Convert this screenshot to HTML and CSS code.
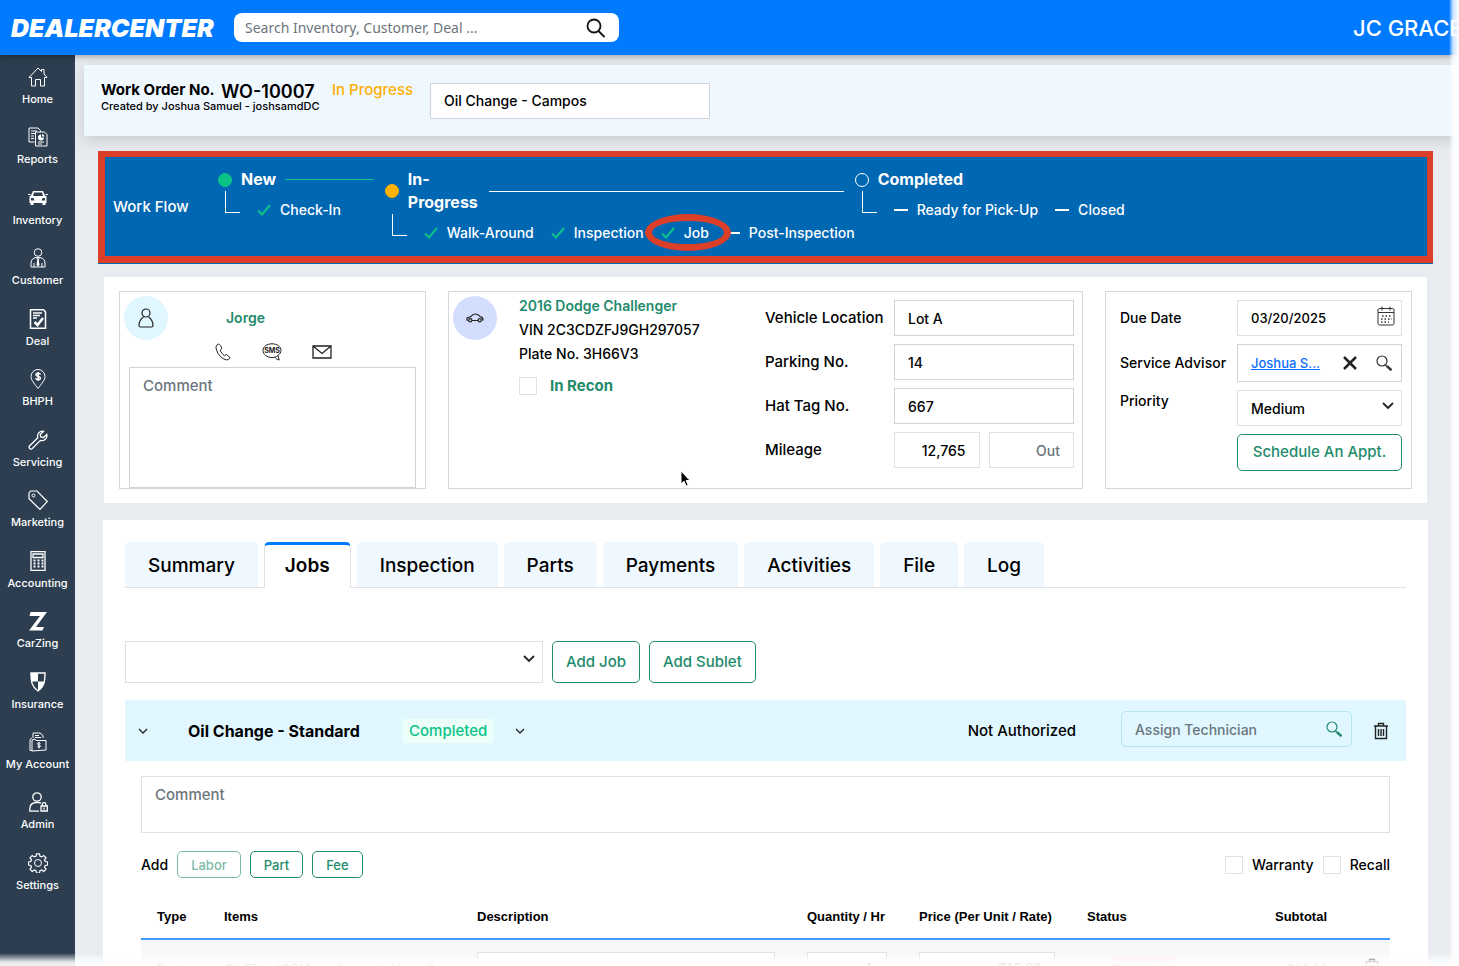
FILE: index.html
```html
<!DOCTYPE html>
<html lang="en">
<head>
  <meta charset="UTF-8">
  <meta name="viewport" content="width=device-width, initial-scale=1.0">
  <title>DealerCenter - Work Order</title>
  <link rel="stylesheet" href="styles.css">
</head>
<body>
  <!-- Top Bar -->
  <header class="topbar">
    <a href="#" class="logo">DEALERCENTER</a>
    <form class="search">
      <input type="search" placeholder="Search Inventory, Customer, Deal ..." aria-label="Search">
      <button type="button" aria-label="Search">
        <svg width="20" height="20" viewBox="0 0 20 20" fill="none" stroke="#111" stroke-width="1.800"><circle cx="8" cy="8" r="6.500"/><path d="M12.500 13l6 6"/></svg>
      </button>
    </form>
    <span class="dealer-name">JC GRACE</span>
  </header>

  <div class="shell">
    <!-- Sidebar -->
    <nav class="sidebar">
      <a href="#">
        <svg viewBox="0 0 20 20"><path d="M1 10.500L10 1l3.500 3.500V2.500h2.500v4.500L19 10.500h-2.500V19h-4v-6.500h-5V19h-4v-8.500z"/></svg>
        Home
      </a>
      <a href="#">
        <svg viewBox="0 0 20 20"><path d="M6.500 15H1V1h9l2.500 2.500V5M3 4h6M3 6.500h4M3 9h3M3 11.500h3M7.500 5h9l2.500 2.500V19H7.500zM10 15h6M10 17h4"/><path class="solid" d="M13 7.500a3 3 0 1 0 3 3h-3z"/><path class="solid" d="M14 7a3 3 0 0 1 2.500 2.500H14z"/></svg>
        Reports
      </a>
      <a href="#">
        <svg viewBox="0 0 20 20"><path class="solid" fill-rule="evenodd" d="M5 3h10l2 4.500 1.500 1v6.500h-1v2h-3v-2h-9v2h-3v-2h-1V8.500l1.500-1zM6 4.500L5 8h10l-1-3.500zM3 10v2.500h3.500L5.500 10zM17 10h-2.500l-1 2.500H17z"/><path d="M0 6.500h2.500M17.500 6.500H20"/></svg>
        Inventory
      </a>
      <a href="#">
        <svg viewBox="0 0 20 20"><circle cx="10" cy="4.500" r="3.800"/><path d="M3 19v-4c0-3 2-5 5-5.500h4c3 .5 5 2.500 5 5.500v4zM6 19v-4M14 19v-4M8.500 9.500L10 12l1.500-2.500"/><path class="solid" d="M9.300 11.500h1.400l.8 5.500-1.500 1.500L8.500 17z"/></svg>
        Customer
      </a>
      <a href="#">
        <svg viewBox="0 0 20 20"><path stroke-width="1.500" d="M3 .8h12.500L17.500 3v16.200H2.500V.8zM5 4h9M5 6.500h7M5 9h4"/><path stroke-width="2.500" d="M6.500 13l3 3 5.500-7"/></svg>
        Deal
      </a>
      <a href="#">
        <svg viewBox="0 0 20 20"><path d="M10 19.500C6 14 3 11 3 7.500a7 7 0 0 1 14 0c0 3.500-3 6.500-7 12z"/><path stroke-width="1.500" d="M12.500 5.500c-.5-1.500-4.500-1.700-4.500.3 0 2.200 4.500 1.200 4.500 3.400 0 2-4.300 1.700-4.800 0M10.200 3v9"/></svg>
        BHPH
      </a>
      <a href="#">
        <svg viewBox="0 0 20 20"><path stroke-width="1.300" d="M15.500 1.300a5 5 0 0 0-5.700 6.500L1.500 16a1.900 1.900 0 0 0 2.600 2.700l8.300-8.300a5 5 0 0 0 6.400-5.900L15.500 7.500 12.700 7l-.5-2.500z"/></svg>
        Servicing
      </a>
      <a href="#">
        <svg viewBox="0 0 20 20"><path stroke-width="1.200" d="M1 3l1.500-2L9 1l10.300 10.500L12 19.500 1 8.800z"/><circle cx="5.500" cy="5.500" r="1.500"/></svg>
        Marketing
      </a>
      <a href="#">
        <svg viewBox="0 0 20 20"><path stroke-width="1.300" d="M3 .7h14v18.600H3zM5 3h10v3.500H5z"/><path stroke-width="2" stroke-dasharray="2 2" d="M5.500 9.500h10M5.500 12.500h10M5.500 15.500h10"/></svg>
        Accounting
      </a>
      <a href="#">
        <svg viewBox="0 0 20 20"><path class="solid" d="M2.500 1H19L8 16h8l-1.500 3.500H1L12 5H1.500z"/></svg>
        CarZing
      </a>
      <a href="#">
        <svg viewBox="0 0 20 20"><path class="solid" d="M10 1v8.500H3.500C3 7 3 4 3 1z"/><path class="solid" d="M10 9.500h6.500C15.500 14 13.500 17 10 19z"/><path stroke-width="1.400" d="M3 1h14c0 9-1 14-7 18C4 15 3 10 3 1z"/></svg>
        Insurance
      </a>
      <a href="#">
        <svg viewBox="0 0 20 20"><path d="M5 6V1h7l3 2.500V6M7 3.500h4M7 5.500h6M4 18.500H2V7.500l2-1.500M4 8l3-1 1 1.500h10V18l-14 1z"/><path d="M12.500 11.500c-.5-1-3-1-3 .3 0 1.500 3 .8 3 2.200 0 1.500-2.800 1.300-3.200.2M11 10v6.500"/></svg>
        My Account
      </a>
      <a href="#">
        <svg viewBox="0 0 20 20"><circle cx="9" cy="5" r="4.200" stroke-width="1.300"/><path stroke-width="1.300" d="M11 19.200H1.800v-2c0-4 2.500-6.400 6-6.700h3c1 .1 1.500.3 2.200.8M13 14h6.300v5H13zM14.300 14v-1.500a1.800 1.800 0 0 1 3.600 0V14M16 15.500v2"/></svg>
        Admin
      </a>
      <a href="#">
        <svg viewBox="0 0 20 20"><circle cx="10" cy="10" r="3.500"/><path stroke-width="1.200" d="M8.500.8h3l.5 2.400 1.700.7 2.100-1.400 2.200 2.200-1.500 2.100.7 1.700 2.400.5v3l-2.400.5-.7 1.700 1.500 2.100-2.200 2.200-2.100-1.500-1.700.7-.5 2.400h-3l-.5-2.400-1.700-.7-2.100 1.500L2 16.300l1.500-2.100-.7-1.700L.500 12V9l2.300-.5.700-1.700L2 4.700l2.200-2.200 2.100 1.400L8 3.200z"/></svg>
        Settings
      </a>
    </nav>

    <main class="content">
      <!-- Work Order Title -->
      <section class="order-bar">
        <div class="order-info">
          <div class="order-line">
            <strong>Work Order No.</strong>
            <span class="order-no">WO-10007</span>
            <span class="order-status">In Progress</span>
          </div>
          <p>Created by Joshua Samuel - joshsamdDC</p>
        </div>
        <input type="text" class="field order-name" value="Oil Change - Campos" aria-label="Work order name">
      </section>

      <!-- Work Flow -->
      <section class="workflow">
        <span class="workflow-label">Work Flow</span>
        <div class="stage">
          <div class="stage-head">
            <span class="dot dot-green"></span><h3>New</h3><span class="line line-green"></span>
          </div>
          <ul class="steps">
            <li><svg class="check" viewBox="0 0 14 12"><path d="M1 6.500l4 4L13 1"/></svg>Check-In</li>
          </ul>
        </div>
        <div class="stage">
          <div class="stage-head">
            <span class="dot dot-orange"></span><h3 class="wrap">In-<br>Progress</h3><span class="line"></span>
          </div>
          <ul class="steps">
            <li><svg class="check" viewBox="0 0 14 12"><path d="M1 6.500l4 4L13 1"/></svg>Walk-Around</li>
            <li><svg class="check" viewBox="0 0 14 12"><path d="M1 6.500l4 4L13 1"/></svg>Inspection</li>
            <li class="current"><svg class="check" viewBox="0 0 14 12"><path d="M1 6.500l4 4L13 1"/></svg>Job</li>
            <li><span class="dash"></span>Post-Inspection</li>
          </ul>
        </div>
        <div class="stage">
          <div class="stage-head">
            <span class="dot"></span><h3>Completed</h3>
          </div>
          <ul class="steps">
            <li><span class="dash"></span>Ready for Pick-Up</li>
            <li><span class="dash"></span>Closed</li>
          </ul>
        </div>
      </section>

      <!-- Customer, Vehicle and Schedule -->
      <section class="cards">
        <div class="card customer">
          <div class="customer-head">
            <span class="avatar">
              <svg width="16" height="20" viewBox="0 0 16 20" fill="none" stroke="#222" stroke-width="1.200"><circle cx="8" cy="5" r="4"/><path d="M5.500 9C2.500 11 1 14 1 17.500c0 1 .5 1.500 1.500 1.500h11c1 0 1.500-.5 1.500-1.500C15 14 13.500 11 10.500 9"/></svg>
            </span>
            <a href="#" class="green-link">Jorge</a>
          </div>
          <div class="contact">
            <button type="button" aria-label="Call"><svg width="18" height="18" viewBox="0 0 18 18"><path d="M4.500 1C2 2 1.500 4 2.500 7c1.500 4.500 4.500 8 8.500 9.500 2.500 1 4.500 0 5-2l-3.500-3-2 1.200C8.500 11.500 7 9.500 6.200 7l1.600-1.500C7.500 3.500 6 1.500 4.500 1z"/></svg></button>
            <button type="button" aria-label="Text message"><svg width="20" height="18" viewBox="0 0 20 18"><path d="M16 12.500C14.500 14 12 14.500 10 14.500 5 14.500 1 11.500 1 7.500S5 .8 10 .8s9 2.700 9 6.700c0 1.800-1.200 3.600-3 5l1.200 4.500c-2-.3-3.200-1.200-4.200-2.700"/><text x="10" y="10">SMS</text></svg></button>
            <button type="button" aria-label="Email"><svg width="20" height="14" viewBox="0 0 20 14"><path stroke-width="1.300" d="M1 1h18v12H1zM1 1l9 7.500L19 1"/></svg></button>
          </div>
          <textarea class="field" placeholder="Comment" aria-label="Customer comment"></textarea>
        </div>

        <div class="card vehicle">
          <span class="avatar avatar-blue">
            <svg width="18" height="10" viewBox="0 0 18 10" fill="none" stroke="#222" stroke-width="1.200"><path d="M2.500 7.500L1 7V5l3.500-1.200C6 2 7 1 9 1c2.500 0 4 1 5.500 2.800C16.500 4 17 5 17 7h-1.500M6 7.500h6"/><circle cx="4.300" cy="7.200" r="1.600"/><circle cx="13.700" cy="7.200" r="1.600"/></svg>
          </span>
          <div class="vehicle-info">
            <a href="#" class="green-link">2016 Dodge Challenger</a>
            <p>VIN 2C3CDZFJ9GH297057</p>
            <p>Plate No. 3H66V3</p>
            <label class="check-label recon"><input type="checkbox"> In Recon</label>
          </div>
          <div class="form-grid vehicle-form">
            <label for="location">Vehicle Location</label>
            <input type="text" id="location" class="field" value="Lot A">
            <label for="parking">Parking No.</label>
            <input type="text" id="parking" class="field" value="14">
            <label for="hat-tag">Hat Tag No.</label>
            <input type="text" id="hat-tag" class="field" value="667">
            <label for="mileage-in">Mileage</label>
            <div class="mileage">
              <input type="text" id="mileage-in" class="field light" value="12,765">
              <input type="text" class="field light" placeholder="Out" aria-label="Mileage out">
            </div>
          </div>
          <svg class="pointer" width="12" height="18" viewBox="0 0 12 18"><path d="M1 1v13l3-2.800L6.200 16l2-1-2.100-4.500H10z" fill="#000" stroke="#fff"/></svg>
        </div>

        <div class="card schedule">
          <div class="form-grid schedule-form">
            <label for="due-date">Due Date</label>
            <div class="field-wrap">
              <input type="text" id="due-date" class="field light" value="03/20/2025">
              <svg class="field-icon" width="18" height="20" viewBox="0 0 18 20" fill="none" stroke="#333"><rect x="1" y="2.500" width="16" height="16.500" rx="1.500"/><path d="M1 6.500h16M5 .5v4M13 .5v4"/><path stroke-width="1.500" stroke-dasharray="1.500 2" d="M5 10h10M4 13h11M4 16h8"/></svg>
            </div>
            <span class="form-label">Service Advisor</span>
            <div class="field advisor">
              <a href="#">Joshua S...</a>
              <button type="button" aria-label="Clear advisor"><svg width="14" height="14" viewBox="0 0 14 14" fill="none" stroke="#222" stroke-width="2.500"><path d="M1 1l12 12M13 1L1 13"/></svg></button>
              <button type="button" aria-label="Find advisor"><svg width="16" height="16" viewBox="0 0 16 16" fill="none" stroke="#333"><circle cx="6" cy="6" r="5" stroke-width="1.200"/><path stroke-width="1.500" d="M9.500 10l1.500 1.500"/><path stroke-width="2.500" d="M11 11.200l4.500 4"/></svg></button>
            </div>
            <label for="priority" class="priority-label">Priority</label>
            <div class="field-wrap">
              <select id="priority" class="field light"><option>Medium</option></select>
              <svg class="field-icon" width="12" height="8" viewBox="0 0 12 8" fill="none" stroke="#222" stroke-width="1.800"><path d="M1 1l5 5 5-5"/></svg>
            </div>
            <button type="button" class="btn schedule-btn">Schedule An Appt.</button>
          </div>
        </div>
      </section>

      <!-- Work Order Details -->
      <section class="details">
        <div class="tabs" role="tablist">
          <button type="button" role="tab">Summary</button>
          <button type="button" role="tab" class="active">Jobs</button>
          <button type="button" role="tab">Inspection</button>
          <button type="button" role="tab">Parts</button>
          <button type="button" role="tab">Payments</button>
          <button type="button" role="tab">Activities</button>
          <button type="button" role="tab">File</button>
          <button type="button" role="tab">Log</button>
        </div>

        <div class="add-job">
          <div class="field-wrap">
            <select class="field light" aria-label="Job"><option></option></select>
            <svg class="field-icon" width="12" height="8" viewBox="0 0 12 8" fill="none" stroke="#222" stroke-width="1.800"><path d="M1 1l5 5 5-5"/></svg>
          </div>
          <button type="button" class="btn">Add Job</button>
          <button type="button" class="btn">Add Sublet</button>
        </div>

        <div class="job-head">
          <button type="button" class="icon-btn" aria-label="Collapse job"><svg width="10" height="6" viewBox="0 0 10 6"><path d="M1 1l4 4 4-4"/></svg></button>
          <h2>Oil Change - Standard</h2>
          <span class="badge">Completed</span>
          <button type="button" class="icon-btn" aria-label="Change status"><svg width="10" height="6" viewBox="0 0 10 6"><path d="M1 1l4 4 4-4"/></svg></button>
          <span class="authorized">Not Authorized</span>
          <div class="field-wrap technician">
            <input type="text" class="field" placeholder="Assign Technician" aria-label="Assign technician">
            <svg class="field-icon" width="16" height="16" viewBox="0 0 16 16" fill="none" stroke="#228b6c"><circle cx="6" cy="6" r="5" stroke-width="1.200"/><path stroke-width="1.500" d="M9.500 10l1.500 1.500"/><path stroke-width="2.500" d="M11 11.200l4.500 4"/></svg>
          </div>
          <button type="button" class="icon-btn" aria-label="Delete job"><svg width="16" height="18" viewBox="0 0 16 18"><path stroke-width="1.400" d="M1 4h14M5.500 4V1.500h5V4M2.500 4v12.500h11V4M5.500 7v7M8 7v7M10.500 7v7"/></svg></button>
        </div>

        <div class="job-body">
          <textarea class="field light" placeholder="Comment" aria-label="Job comment"></textarea>
          <div class="add-line">
            <span>Add</span>
            <button type="button" class="btn btn-small" disabled>Labor</button>
            <button type="button" class="btn btn-small">Part</button>
            <button type="button" class="btn btn-small">Fee</button>
            <label class="check-label push"><input type="checkbox"> Warranty</label>
            <label class="check-label"><input type="checkbox"> Recall</label>
          </div>
          <table>
            <thead>
              <tr>
                <th class="col-type">Type</th>
                <th class="col-items">Items</th>
                <th class="col-desc">Description</th>
                <th class="col-qty">Quantity / Hr</th>
                <th class="col-price">Price (Per Unit / Rate)</th>
                <th>Status</th>
                <th class="right">Subtotal</th>
                <th class="col-delete"></th>
              </tr>
            </thead>
            <tbody>
              <tr>
                <td>Part</td>
                <td>Oil Filter (OEM or aftermarket brand)</td>
                <td><input type="text" class="field light" aria-label="Description"></td>
                <td><input type="text" class="field light right" value="1" aria-label="Quantity"></td>
                <td><input type="text" class="field light right" value="$10.00" aria-label="Price"></td>
                <td><span class="requested">Requested</span></td>
                <td class="right">$10.00</td>
                <td class="right delete"><button type="button" class="icon-btn" aria-label="Delete line"><svg width="16" height="18" viewBox="0 0 16 18"><path stroke-width="1.400" d="M1 4h14M5.500 4V1.500h5V4M2.500 4v12.500h11V4M5.500 7v7M8 7v7M10.500 7v7"/></svg></button></td>
              </tr>
            </tbody>
          </table>
        </div>
      </section>
    </main>
  </div>
  <div class="fade fade-right"></div>
  <div class="fade fade-bottom"></div>
</body>
</html>
```
FILE: styles.css
```css
/* Reset */
*,
*::before,
*::after {
  margin: 0;
  padding: 0;
  box-sizing: border-box;
}

body {
  height: 100vh;
  display: flex;
  flex-direction: column;
  overflow: hidden;
  background-color: #e8ecf1;
  color: #000;
  font-family: Inter, "Liberation Sans", sans-serif;
  font-size: 14px;
  font-weight: 500;
}

button,
input,
select,
textarea {
  font: inherit;
  color: inherit;
}

button {
  background: none;
  border: none;
  cursor: pointer;
}

a {
  text-decoration: none;
}

ul {
  list-style: none;
}

/* Top Bar */
.topbar {
  flex: none;
  height: 55px;
  display: flex;
  align-items: center;
  padding-left: 11px;
  background-color: #007bff;
  box-shadow: 0 2px 6px rgba(0, 0, 0, 0.3);
  position: relative;
  z-index: 1;
}

.logo {
  width: 223px;
  color: #fff;
  font-size: 25px;
  font-weight: 900;
  font-style: italic;
}

.search {
  width: 385px;
  height: 29px;
  display: flex;
  align-items: center;
  padding: 0 13px 0 11px;
  background-color: #fff;
  border-radius: 8px;
}

.search input {
  flex: 1;
  border: none;
  outline: none;
  background: none;
  font-family: "Noto Sans", sans-serif;
  font-weight: 400;
}

.search button,
.search svg {
  display: block;
}

::placeholder {
  color: #6c757d;
  opacity: 1;
}

.dealer-name {
  width: 106px;
  margin-left: auto;
  color: #fff;
  font-size: 22px;
  white-space: nowrap;
  overflow: hidden;
}

/* Layout */
.shell {
  flex: 1;
  min-height: 0;
  display: flex;
}

.content {
  flex: 1;
  min-width: 0;
  padding: 10px 0 0 9px;
  overflow: hidden;
}

/* Sidebar */
.sidebar {
  flex: none;
  width: 75px;
  display: flex;
  flex-direction: column;
  justify-content: space-between;
  padding: 12px 0 74px;
  background-color: #2c3e50;
}

.sidebar a {
  display: flex;
  flex-direction: column;
  align-items: center;
  gap: 5px;
  color: #fff;
  font-size: 11px;
  line-height: 14px;
  font-weight: 500;
  white-space: nowrap;
}

.sidebar svg {
  width: 20px;
  height: 20px;
  fill: none;
  stroke: #fff;
}

.sidebar .solid {
  fill: #fff;
  stroke: none;
}

/* Work Order Title */
.order-bar {
  height: 71px;
  display: flex;
  align-items: center;
  padding-left: 17px;
  background-color: #eff7ff;
  box-shadow: 0 4px 14px rgba(0, 0, 0, 0.14);
}

.order-info {
  width: 329px;
  padding-bottom: 7px;
  white-space: nowrap;
}

.order-line {
  height: 18px;
  display: flex;
  font-size: 15px;
  line-height: 16px;
}

.order-line strong {
  width: 120px;
  font-weight: 700;
}

.order-no {
  width: 111px;
  font-size: 18px;
  line-height: 20px;
  font-weight: 600;
}

.order-status {
  color: #ffb000;
}

.order-info p {
  font-size: 11px;
  line-height: 12px;
}

.field {
  width: 100%;
  height: 36px;
  padding: 0 13px;
  background-color: #fff;
  border: 1px solid #ced4da;
  outline: none;
  font-size: 14px;
}

.field.light {
  border-color: #dee2e6;
}

.field.order-name {
  width: 280px;
}

textarea.field {
  display: block;
  padding-top: 8px;
  font-size: 15px;
  resize: none;
}

/* Work Flow */
.workflow {
  display: grid;
  grid-template-columns: 105px 167fr 469fr 573fr;
  height: 112px;
  margin: 15px 26px 0 14px;
  padding: 11px 0 0 8px;
  background-color: #0067b3;
  border: 6px solid #dc3f27;
  border-bottom-width: 7px;
  border-left-width: 7px;
  box-shadow: 0 1px 0 #0067b3;
  color: #fff;
  white-space: nowrap;
}

.workflow-label {
  padding-top: 29px;
  font-size: 15px;
}

.stage-head {
  display: flex;
  align-items: center;
  gap: 9px;
}

.stage h3 {
  font-size: 16px;
  line-height: 23px;
  font-weight: 700;
}

.stage h3.wrap {
  width: 72px;
}

.dot {
  width: 14px;
  height: 14px;
  border: 1px solid #fff;
  border-radius: 50%;
}

.dot-green {
  background-color: #0cc387;
  border-color: #0cc387;
}

.dot-orange {
  background-color: #ffb000;
  border-color: #ffb000;
}

.line {
  flex: 1;
  height: 1px;
  margin-right: 11px;
  background-color: #fff;
}

.line-green {
  background-color: #0cc387;
}

.steps {
  display: flex;
  gap: 17px;
  font-size: 14px;
  line-height: 38px;
}

/* Elbow from the stage dot to its steps */
.steps::before {
  content: "";
  width: 15px;
  height: 22px;
  margin-left: 7px;
  border-left: 1px solid #fff;
  border-bottom: 1px solid #fff;
}

.steps li {
  display: flex;
  align-items: center;
  gap: 9px;
}

.check {
  width: 14px;
  height: 12px;
  fill: none;
  stroke: #0cc387;
  stroke-width: 2;
}

.dash {
  width: 14px;
  height: 2px;
  background-color: #fff;
}

.current {
  position: relative;
}

.current::after {
  content: "";
  position: absolute;
  top: 0;
  left: -16px;
  right: -22px;
  height: 37px;
  border: 7px solid #dc3f27;
  border-radius: 50%;
}

/* Cards */
.cards {
  display: grid;
  grid-template-columns: 307px 1fr 307px;
  gap: 22px;
  margin: 14px 32px 0 20px;
  padding: 14px 15px;
  background-color: #fff;
}

.card {
  height: 198px;
  border: 1px solid #d5d8dc;
}

.avatar {
  flex: none;
  width: 44px;
  height: 44px;
  display: flex;
  align-items: center;
  justify-content: center;
  background-color: #e0f7ff;
  border-radius: 50%;
}

.avatar-blue {
  background-color: #d3deff;
}

.green-link {
  color: #228b6c;
  font-weight: 600;
}

.customer {
  display: flex;
  flex-direction: column;
  padding: 4px 9px 0;
}

.customer-head {
  display: flex;
  align-items: center;
  gap: 58px;
  margin-left: -5px;
}

.customer-head a {
  padding-bottom: 2px;
}

.contact {
  display: flex;
  align-items: center;
  justify-content: center;
  gap: 30px;
  height: 27px;
  padding-bottom: 4px;
}

.contact button,
.contact svg {
  display: block;
}

.contact svg {
  fill: none;
  stroke: #222;
}

.contact text {
  fill: #222;
  stroke: none;
  font-size: 7px;
  font-weight: 700;
  text-anchor: middle;
}

.customer textarea {
  flex: 1;
}

.vehicle {
  position: relative;
  display: flex;
  padding: 4px 8px 0 4px;
}

.vehicle-info {
  padding-left: 22px;
  line-height: 24px;
  white-space: nowrap;
}

.vehicle-info a {
  display: block;
  margin-bottom: 2px;
  line-height: 20px;
}

.recon {
  margin-top: 8px;
  color: #228b6c;
  font-size: 15px;
  font-weight: 700;
}

.check-label {
  display: flex;
  align-items: center;
  gap: 9px;
}

.vehicle-info .check-label {
  gap: 13px;
}

input[type="checkbox"] {
  width: 18px;
  height: 18px;
  appearance: none;
  background-color: #fff;
  border: 1px solid #dee2e6;
}

.form-grid {
  display: grid;
  align-items: center;
  align-content: start;
  gap: 8px 0;
  white-space: nowrap;
}

.form-grid label,
.form-label {
  padding-bottom: 2px;
}

.vehicle-form {
  grid-template-columns: 129px 180px;
  margin: 4px 0 0 auto;
  font-size: 15px;
}

.mileage {
  display: grid;
  grid-template-columns: 1fr 1fr;
  gap: 9px;
}

.mileage .field,
.right {
  text-align: right;
}

/* Mouse pointer left on the card */
.pointer {
  position: absolute;
  left: 231px;
  top: 178px;
}

.schedule {
  padding: 8px 9px 0 14px;
}

.schedule-form {
  grid-template-columns: 1fr 165px;
}

.form-grid .priority-label {
  align-self: start;
  padding-top: 2px;
}

.field-wrap {
  position: relative;
}

.field-icon {
  position: absolute;
  top: 12px;
  right: 8px;
}

#due-date {
  font-size: 13px;
}

#due-date + .field-icon {
  top: 6px;
  right: 7px;
}

select.field {
  display: block;
  appearance: none;
}

.advisor {
  height: 38px;
  display: flex;
  align-items: center;
  gap: 19px;
  padding-right: 9px;
  font-size: 13px;
}

.advisor a {
  flex: 1;
  color: #0d6efd;
  text-decoration: underline;
}

.advisor button,
.advisor svg {
  display: block;
}

.btn {
  padding: 0 13px 2px;
  background-color: #fff;
  border: 1px solid #228b6c;
  border-radius: 5px;
  color: #228b6c;
  font-size: 15px;
}

.btn:disabled {
  opacity: 0.6;
}

.schedule-btn {
  grid-column: 2;
  height: 37px;
}

/* Details */
.details {
  margin: 17px 31px 0 19px;
  padding: 22px 22px 40px;
  background-color: #fff;
}

.tabs {
  display: flex;
  gap: 6px;
  height: 46px;
  border-bottom: 1px solid #dee2e6;
}

.tabs button {
  padding: 2px 23px 0;
  background-color: #eff7ff;
  border-radius: 5px 5px 0 0;
  font-size: 19px;
}

.tabs .active {
  height: 46px;
  padding: 0 20px 2px;
  background-color: #fff;
  border: 1px solid #dee2e6;
  border-top: 3px solid #007bff;
  border-bottom: none;
  font-weight: 600;
}

.add-job {
  display: flex;
  gap: 9px;
  height: 42px;
  margin-top: 53px;
}

.add-job .field-wrap {
  width: 418px;
}

.add-job .field {
  height: 42px;
}

.add-job .field-icon {
  top: 14px;
}

.job-head {
  display: flex;
  align-items: center;
  height: 61px;
  margin-top: 17px;
  padding: 0 17px 0 13px;
  background-color: #e0f7ff;
  font-size: 15px;
}

.icon-btn svg {
  display: block;
  fill: none;
  stroke: #222;
  stroke-width: 1.3px;
}

.job-head h2 {
  width: 215px;
  margin-left: 40px;
  font-size: 16px;
  font-weight: 700;
  white-space: nowrap;
}

.badge {
  margin-right: 22px;
  padding: 0 6px;
  background-color: #ecfff9;
  color: #0cc387;
  line-height: 24px;
}

.authorized {
  margin-left: auto;
}

.technician {
  width: 231px;
  margin: 0 21px 3px 45px;
}

.technician .field {
  background-color: transparent;
  border-color: #b3e8e0;
  border-radius: 5px;
}

.technician .field-icon {
  top: 10px;
  right: 10px;
}

.job-body {
  padding: 15px 16px 0;
}

.job-body textarea {
  height: 57px;
}

.add-line {
  display: flex;
  align-items: center;
  gap: 9px;
  margin-top: 18px;
}

.btn-small {
  height: 27px;
  padding-bottom: 0;
  font-size: 13px;
}

.push {
  margin-left: auto;
}

/* Line Items */
table {
  width: 100%;
  margin-top: 16px;
  table-layout: fixed;
  border-collapse: collapse;
  font-family: "Liberation Sans", sans-serif;
  font-size: 13px;
}

th,
td {
  padding: 0 16px;
  text-align: left;
  white-space: nowrap;
}

th {
  height: 45px;
  border-bottom: 2px solid #3f9bff;
}

td {
  padding-top: 12px;
  background-color: #f8f8f8;
}

td .field {
  height: 32px;
}

th.right,
td.right {
  text-align: right;
}

td.delete {
  padding-right: 10px;
}

.col-type {
  width: 67px;
}

.col-items {
  width: 253px;
}

.col-desc {
  width: 330px;
}

.col-qty {
  width: 112px;
}

.col-price {
  width: 168px;
}

.col-delete {
  width: 47px;
}

.requested {
  margin-left: 20px;
  padding: 3px 5px;
  background-color: #ffe9e9;
  color: #ff3b3b;
}

/* Soft page edges */
.fade {
  position: fixed;
  right: 0;
  bottom: 0;
  z-index: 2;
  pointer-events: none;
}

.fade-right {
  top: 0;
  width: 10px;
  background: linear-gradient(to right, rgba(255, 255, 255, 0), rgba(255, 255, 255, 0.8) 40%, #fff);
}

.fade-bottom {
  left: 0;
  height: 13px;
  background: linear-gradient(to bottom, rgba(255, 255, 255, 0), rgba(255, 255, 255, 0.88) 70%, rgba(255, 255, 255, 0.94));
}
```
